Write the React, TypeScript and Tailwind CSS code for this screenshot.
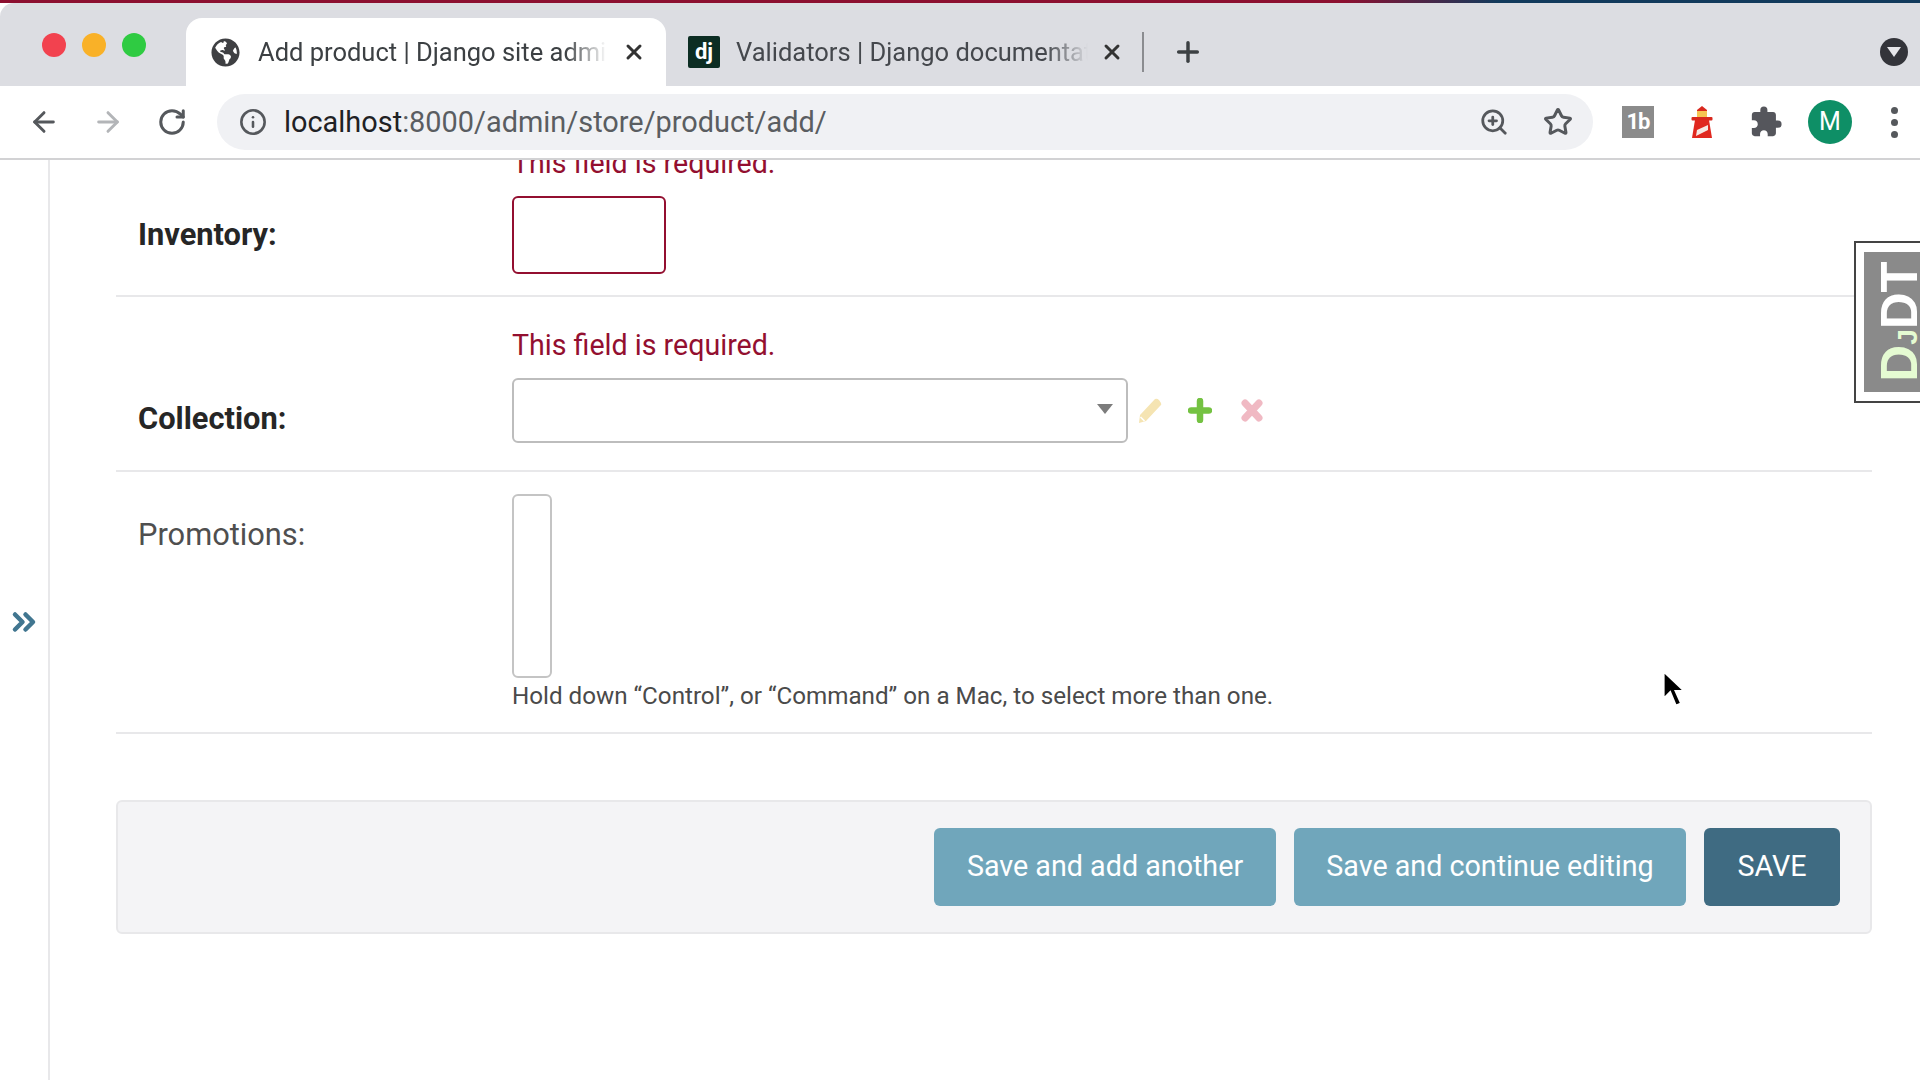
import { ArrowLeft, ArrowRight, RotateCw, Info, ZoomIn, Star, X, Plus, ChevronsRight } from "lucide-react";
import { FaGlobeAmericas } from "react-icons/fa";
import { MdExtension } from "react-icons/md";

function Lighthouse() {
  return (
    <svg width="22" height="32" viewBox="0 0 22 32">
      <path d="M11 0 L16 4 V7 H6 V4 Z" fill="#d9281e" />
      <rect x="6" y="5" width="10" height="7" fill="#f6c453" />
      <rect x="0.5" y="11" width="21" height="3.5" rx="1" fill="#d9281e" />
      <path d="M4 14 H18 L21 32 H1 Z" fill="#e0281f" />
      <path d="M5 30 L6 24 L17 19 L17 24 Z" fill="#f5e9e4" />
    </svg>
  );
}

function Pencil() {
  return (
    <svg width="24" height="26" viewBox="0 0 24 26">
      <path d="M17 1 Q19 0 21 2 L23 5 Q24 7 22 8 L8 23 L1 25 L2 17 Z" fill="#f5e4b2" />
      <path d="M2.5 19 L6.5 23" stroke="#fff" strokeWidth="1.6" />
    </svg>
  );
}

function AddIcon() {
  return (
    <svg width="24" height="25" viewBox="0 0 24 25">
      <path d="M12 3 V22 M3 12.5 H21" stroke="#74c242" strokeWidth="6.5" strokeLinecap="round" />
    </svg>
  );
}

function DelIcon() {
  return (
    <svg width="22" height="23" viewBox="0 0 22 23">
      <path d="M4 4 L18 19 M18 4 L4 19" stroke="#f0b9c3" strokeWidth="7" strokeLinecap="round" />
    </svg>
  );
}

function ErrorText({ clipped }: { clipped?: boolean }) {
  return (
    <div className={`text-[28.6px] leading-[32px] text-[#930f30] ${clipped ? "-mt-[13px]" : ""}`}>
      This field is required.
    </div>
  );
}

export default function App() {
  return (
    <div className="relative flex h-screen w-full flex-col overflow-hidden bg-white font-['Roboto','Liberation_Sans',sans-serif] text-[#333]">
      {/* window top edge */}
      <div className="h-[3px] shrink-0 bg-[linear-gradient(to_right,#8c0f30_0%,#8c0f30_70%,#123a5c_78%,#123a5c_100%)]" />

      {/* tab strip */}
      <div className="flex h-[83px] shrink-0 items-start rounded-tl-[14px] bg-[#dcdde2]">
        <div className="flex h-[84px] w-[186px] shrink-0 items-center gap-[16px] pl-[42px]">
          <span className="h-[24px] w-[24px] rounded-full bg-[#f2424f]" />
          <span className="h-[24px] w-[24px] rounded-full bg-[#f9b128]" />
          <span className="h-[24px] w-[24px] rounded-full bg-[#2fcb42]" />
        </div>
        <div className="mt-[15px] flex h-[68px] w-[480px] shrink-0 items-center rounded-t-[16px] bg-white pl-[25px] text-[25.5px] text-[#3c4043]">
          <FaGlobeAmericas className="shrink-0 text-[#3f4043]" size={29} />
          <span className="ml-[18px] w-[349px] overflow-hidden whitespace-nowrap [mask-image:linear-gradient(to_right,black_88%,transparent_100%)]">
            Add product | Django site admin
          </span>
          <X className="ml-[15px] shrink-0 text-[#333]" size={24} strokeWidth={3} />
        </div>
        <div className="mt-[15px] flex h-[68px] shrink-0 items-center pl-[22px] text-[25.5px] text-[#45484d]">
          <span className="flex h-[32px] w-[32px] shrink-0 items-center justify-center rounded-[2px] bg-[#0c2d23] text-[22px] leading-none font-bold text-white">
            dj
          </span>
          <span className="ml-[16px] w-[352px] overflow-hidden whitespace-nowrap [mask-image:linear-gradient(to_right,black_88%,transparent_100%)]">
            Validators | Django documentation
          </span>
          <X className="ml-[12px] shrink-0 text-[#333]" size={24} strokeWidth={3} />
          <span className="ml-[18px] h-[40px] w-[2px] shrink-0 bg-[#8b8c90]" />
          <Plus className="ml-[28px] shrink-0 text-[#3c4043]" size={32} strokeWidth={2.6} />
        </div>
        <div className="flex-1" />
        <div className="mt-[35px] mr-[12px] flex h-[28px] w-[28px] shrink-0 items-center justify-center rounded-full bg-[#33343a]">
          <span className="h-0 w-0 border-x-[7px] border-t-[10px] border-x-transparent border-t-[#e6e6ea]" />
        </div>
      </div>

      {/* toolbar */}
      <div className="flex h-[74px] shrink-0 items-center overflow-hidden border-b-2 border-[#d2d2d4] pl-[12px]">
        <span className="flex w-[64px] shrink-0 justify-center"><ArrowLeft size={32} strokeWidth={2.2} className="text-[#55585c]" /></span>
        <span className="flex w-[64px] shrink-0 justify-center"><ArrowRight size={32} strokeWidth={2.2} className="text-[#b3b5b8]" /></span>
        <span className="flex w-[64px] shrink-0 justify-center"><RotateCw size={30} strokeWidth={2.4} className="text-[#55585c]" /></span>
        <div className="ml-[13px] flex h-[56px] w-[1376px] shrink-0 items-center rounded-full bg-[#f0f1f4] pl-[22px] pr-[16px]">
          <Info size={28} strokeWidth={2.2} className="shrink-0 text-[#55585c]" />
          <span className="ml-[17px] pt-[2px] text-[28.9px] whitespace-nowrap text-[#5a5d61]">
            <span className="text-[#1f2124]">localhost</span>:8000/admin/store/product/add/
          </span>
          <div className="flex-1" />
          <ZoomIn size={30} strokeWidth={2.2} className="shrink-0 text-[#55585c]" />
          <Star size={30} strokeWidth={2.4} className="ml-[34px] mr-[4px] shrink-0 text-[#55585c]" />
        </div>
        <div className="ml-[13px] flex w-[64px] shrink-0 justify-center">
          <span className="flex h-[32px] w-[32px] items-center justify-center bg-[#8b8b8b] text-[22px] leading-none font-bold tracking-[-1px] text-white">1b</span>
        </div>
        <div className="flex w-[64px] shrink-0 justify-center"><Lighthouse /></div>
        <div className="flex w-[64px] shrink-0 justify-center"><MdExtension size={34} className="text-[#55565c]" /></div>
        <div className="flex w-[64px] shrink-0 justify-center">
          <span className="flex h-[44px] w-[44px] items-center justify-center rounded-full bg-[#0e8f66] text-[25px] text-white">M</span>
        </div>
        <div className="flex w-[64px] shrink-0 flex-col items-center gap-[5px]">
          <span className="h-[7px] w-[7px] rounded-full bg-[#55585c]" />
          <span className="h-[7px] w-[7px] rounded-full bg-[#55585c]" />
          <span className="h-[7px] w-[7px] rounded-full bg-[#55585c]" />
        </div>
      </div>

      {/* page */}
      <div className="flex min-h-0 flex-1 overflow-hidden">
        <div className="relative flex w-[50px] shrink-0 items-center justify-center border-r-2 border-[#e8e8ea]">
          <ChevronsRight size={36} strokeWidth={3} className="mt-[4px] text-[#417690]" />
        </div>
        <div className="min-w-0 flex-1 pl-[66px] pr-[48px]">
          {/* inventory */}
          <div className="flex h-[137px] border-b-2 border-[#e8e8ea] px-[22px]">
            <div className="w-[374px] shrink-0 pt-[59px] text-[30.8px] leading-[32px] font-bold text-[#262626]">Inventory:</div>
            <div>
              <ErrorText clipped />
              <div className="mt-[17px] h-[78px] w-[154px] rounded-[6px] border-2 border-[#930f30]" />
            </div>
          </div>
          {/* collection */}
          <div className="flex h-[175px] border-b-2 border-[#e8e8ea] px-[22px]">
            <div className="w-[374px] shrink-0 pt-[106px] text-[30.8px] leading-[32px] font-bold text-[#262626]">Collection:</div>
            <div className="pt-[32px]">
              <ErrorText />
              <div className="mt-[17px] flex items-center">
                <div className="flex h-[65px] w-[616px] items-center justify-end rounded-[6px] border-2 border-[#bdbdbd] pb-[4px] pr-[13px]">
                  <span className="h-0 w-0 border-x-[8px] border-t-[10px] border-x-transparent border-t-[#7c7c7c]" />
                </div>
                <span className="ml-[10px] flex w-[24px] justify-center"><Pencil /></span>
                <span className="ml-[26px] flex w-[24px] justify-center"><AddIcon /></span>
                <span className="ml-[29px] flex w-[22px] justify-center"><DelIcon /></span>
              </div>
            </div>
          </div>
          {/* promotions */}
          <div className="flex h-[262px] border-b-2 border-[#e8e8ea] px-[22px]">
            <div className="w-[374px] shrink-0 pt-[47px] text-[30.8px] leading-[32px] text-[#4f4f4f]">Promotions:</div>
            <div className="pt-[22px]">
              <div className="h-[184px] w-[40px] rounded-[6px] border-2 border-[#c4c4c4]" />
              <div className="mt-[4px] text-[24.2px] leading-[28px] whitespace-nowrap text-[#4a4a4a]">
                Hold down “Control”, or “Command” on a Mac, to select more than one.
              </div>
            </div>
          </div>
          {/* submit row */}
          <div className="mt-[66px] flex h-[134px] items-center justify-end gap-[18px] rounded-[6px] border-2 border-[#e8e8ea] bg-[#f4f4f6] pr-[30px] text-[28.7px] text-white">
            <button className="flex h-[78px] w-[342px] items-center justify-center rounded-[6px] bg-[#70a6bb]">Save and add another</button>
            <button className="flex h-[78px] w-[392px] items-center justify-center rounded-[6px] bg-[#70a6bb]">Save and continue editing</button>
            <button className="flex h-[78px] w-[136px] items-center justify-center rounded-[6px] bg-[#3f6b82]">SAVE</button>
          </div>
        </div>
      </div>

      {/* debug toolbar handle */}
      <div className="absolute top-[241px] right-0 flex h-[162px] w-[66px] items-stretch border-y-2 border-l-2 border-[#444] bg-white py-[9px] pl-[8px]">
        <div className="flex flex-1 items-center justify-center overflow-hidden bg-[#8a8a8a] pb-[2px] pl-[15px]">
          <div className="shrink-0 -rotate-90 whitespace-nowrap font-['Liberation_Sans',sans-serif] text-[51px] leading-none font-bold">
            <span className="text-[#e5fbd2]">D<span className="text-[28px]">J</span></span><span className="text-white">DT</span>
          </div>
        </div>
      </div>

      {/* mouse pointer */}
      <svg className="absolute top-[669px] left-[1660px]" width="27" height="40" viewBox="0 0 24 36">
        <path d="M3 2 V27 L9 21 L14 33 L19 31 L14 20 L22 20 Z" fill="#000" stroke="#fff" strokeWidth="2" />
      </svg>
    </div>
  );
}
